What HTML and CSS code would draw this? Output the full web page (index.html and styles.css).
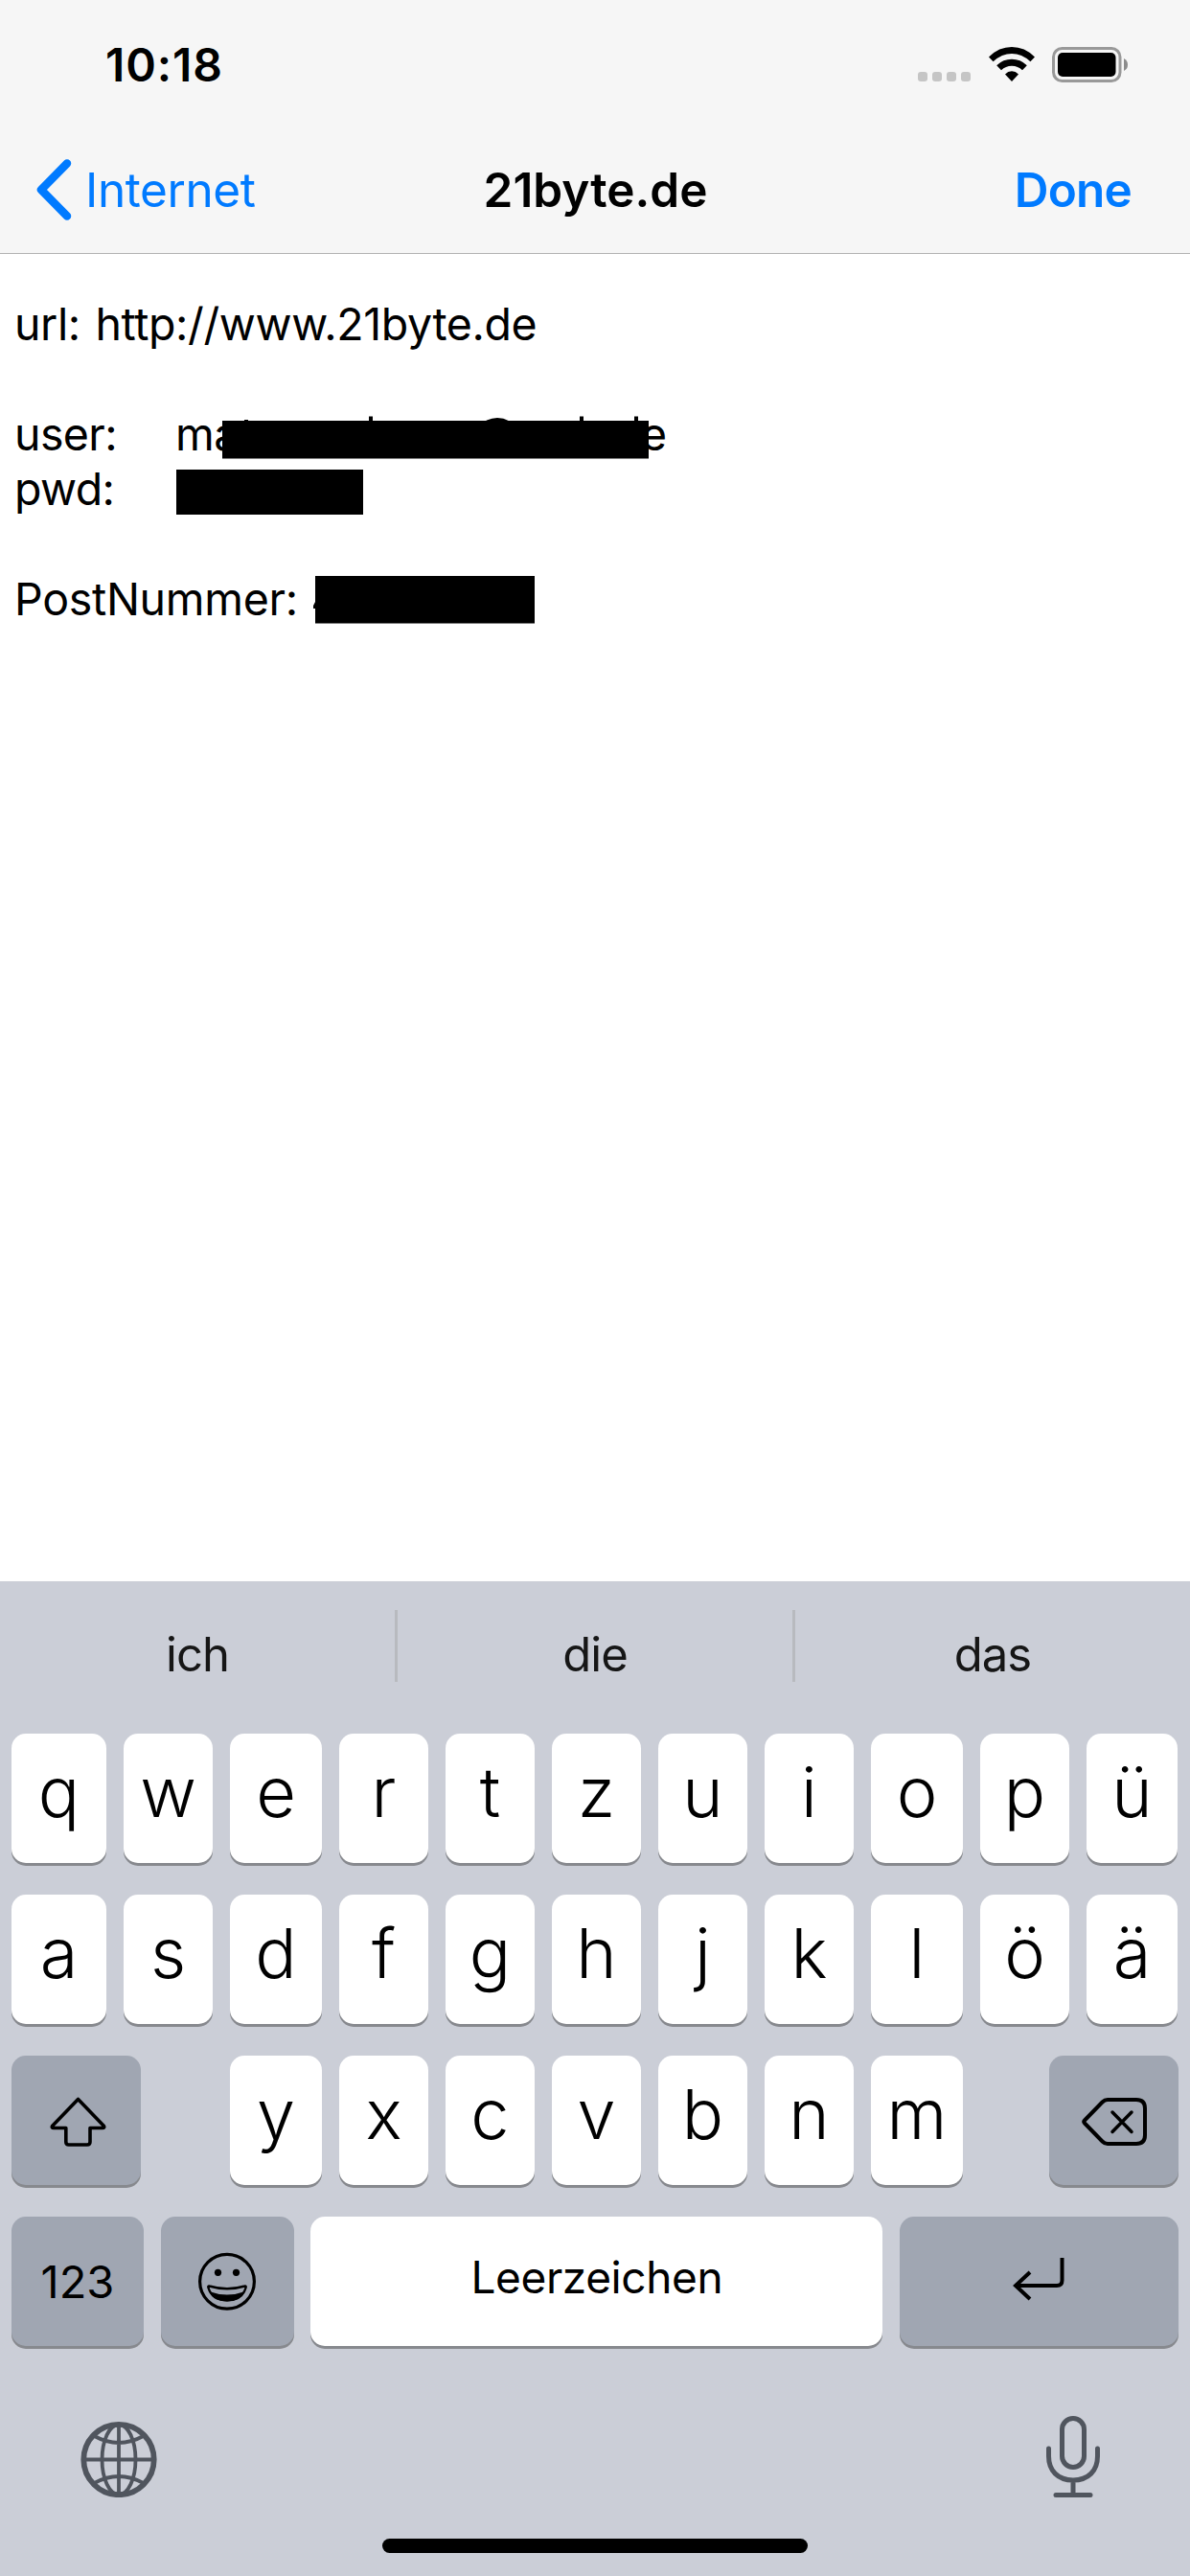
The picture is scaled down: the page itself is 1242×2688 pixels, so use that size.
FILE: index.html
```html
<!DOCTYPE html>
<html lang="de">
<head>
<meta charset="utf-8">
<title>21byte.de</title>
<link rel="stylesheet" href="styles.css">
</head>
<body>
<div class="screen">
  <header class="header">
    <div class="status">
      <span class="time">10:18</span>
      <div class="status-icons">
        <svg class="signal" width="55" height="10" viewBox="0 0 55 10" fill="#c5c5c5"><rect width="10" height="10" rx="3"/><rect x="15" width="10" height="10" rx="3"/><rect x="30" width="10" height="10" rx="3"/><rect x="45" width="10" height="10" rx="3"/></svg>
        <svg class="wifi" width="48" height="36" viewBox="0 0 48 36"><path d="M0 10.4Q10.500 0 24 0T48 10.400L43.400 15.200Q34.500 7 24 7T4.600 15.200ZM8.200 19.200Q15 12.800 24 12.800T39.800 19.200L35 24.200Q30.500 19.700 24 19.700T13 24.200ZM17 28.400Q20 25.300 24 25.300T31 28.400L24 36Z"/></svg>
        <svg class="battery" width="80" height="37" viewBox="0 0 80 37"><rect x="1.500" y="1.500" width="69.500" height="34" rx="9" fill="none" stroke="#999" stroke-width="3"/><rect x="6" y="6" width="60.500" height="25" rx="5"/><path d="M75 12Q79 14 79 18.500T75 25Z" fill="#8c8c8c"/></svg>
      </div>
    </div>
    <nav class="nav">
      <a class="back"><svg width="37" height="64" viewBox="0 0 37 64" fill="none" stroke="#007aff" stroke-width="8.500" stroke-linecap="round" stroke-linejoin="round"><path d="M32 4.500L5 32L32 59.500"/></svg><span class="back-label">Internet</span></a>
      <h1 class="title">21byte.de</h1>
      <a class="done">Done</a>
    </nav>
  </header>

  <main class="note">
    <p class="line"><span class="url">url: http://www.21byte.de</span></p>
    <p class="line"></p>
    <p class="line"><span class="label">user:</span><span class="user">ma</span><span class="user-end">e</span>
      <svg class="user-bar" width="445" height="46" viewBox="0 0 445 46"><path d="M0 6H445V45.500H0ZM23 5h4v2h-4ZM153 1.500h4v6h-4ZM373 1.500h4v6h-4ZM430 1.500h4v6h-4Z"/><path d="M275 8Q287 1.500 299 8" fill="none" stroke="#000" stroke-width="3.500"/></svg></p>
    <p class="line"><span class="label">pwd:</span><i class="pwd-bar"></i></p>
    <p class="line"></p>
    <p class="line"><span class="post">PostNummer:</span><svg class="post-bar" width="231" height="50" viewBox="0 0 231 50"><path d="M2 0H231V49.500H2V34H0V31L2 27Z"/></svg></p>
  </main>

  <section class="keyboard">
    <div class="suggestions"><span>ich</span><i></i><span>die</span><i></i><span>das</span></div>
    <div class="keys">
      <div class="row letters"><b>q</b><b>w</b><b>e</b><b>r</b><b>t</b><b>z</b><b>u</b><b>i</b><b>o</b><b>p</b><b>ü</b></div>
      <div class="row letters"><b>a</b><b>s</b><b>d</b><b>f</b><b>g</b><b>h</b><b>j</b><b>k</b><b>l</b><b>ö</b><b>ä</b></div>
      <div class="row third">
        <b class="dark"><svg width="135" height="135" viewBox="0 0 135 135" fill="none" stroke="#000" stroke-width="3.600" stroke-linejoin="round"><path d="M69.500 45.500L42.500 73.500Q41.500 75.500 44 75.500H56.800V90Q56.800 93 59.800 93H79Q82 93 82 90V75.500H95Q97.500 75.500 96.500 73.500Z"/></svg></b>
        <b class="y">y</b><b>x</b><b>c</b><b>v</b><b>b</b><b>n</b><b>m</b>
        <b class="dark delete"><svg width="135" height="135" viewBox="0 0 135 135" fill="none" stroke="#000" stroke-width="4" stroke-linecap="round" stroke-linejoin="round"><path d="M37 67.500L55.500 48.500Q58 46 61 46H91Q100 46 100 55V83Q100 92 91 92H61Q58 92 55.500 89.500L37 70.500Q35.500 69 37 67.500Z"/><path stroke-width="3.500" d="M66 59L86 79.500M86 59L66 79.500"/></svg></b>
      </div>
      <div class="row fourth">
        <b class="dark num">123</b>
        <b class="dark"><svg width="139" height="135" viewBox="0 0 139 135" fill="none" stroke="#000" stroke-width="3.200"><circle cx="69" cy="67.800" r="28.400"/><g fill="#000" stroke="none"><circle cx="59.500" cy="58.300" r="3.600"/><circle cx="78.500" cy="58.300" r="3.600"/><path d="M50 78Q69 85 88 78Q83 88.500 69 88.500T50 78Z"/></g><path stroke-width="2.400" stroke-linejoin="round" d="M50.500 72.500Q69 78 87.500 72.500Q89 72 88.600 74C86 83 79 87.300 69 87.300S52 83 49.400 74Q49 72 50.500 72.500Z"/></svg></b>
        <b class="space">Leerzeichen</b>
        <b class="dark"><svg width="291" height="135" viewBox="0 0 291 135" fill="none" stroke="#000" stroke-width="4"><path d="M169.500 43V66.500Q169.500 72 164 72H121M136 58L121 72L136 86"/></svg></b>
      </div>
    </div>
    <div class="bottom">
      <svg width="80" height="86" viewBox="0 0 80 86" fill="none" stroke="#50555e" stroke-width="3.800"><circle cx="40" cy="46.500" r="36.700" stroke-width="5.800"/><ellipse cx="40" cy="46.500" rx="17.500" ry="36.500"/><path d="M40 10V83M3 46.500H77M14.500 22Q40 36 65.500 22M14.500 71Q40 57 65.500 71"/></svg>
      <svg width="56" height="86" viewBox="0 0 56 86" fill="none" stroke="#50555e" stroke-width="5" stroke-linecap="round"><rect x="16.500" y="3.500" width="23" height="51" rx="11.500"/><path d="M2.500 35V43C2.500 58 12 68 28 68S53.500 58 53.500 43V35M28 68V83M10 83.500H46"/></svg>
    </div>
    <div class="home"></div>
  </section>
</div>
</body>
</html>
```
FILE: styles.css
```css
* { box-sizing: border-box; }
body { margin: 0; background: #fff; color: #000; font-family: Inter, "Liberation Sans", sans-serif; }
svg { display: block; flex: none; }
.screen { width: 1242px; height: 2688px; display: flex; flex-direction: column; overflow: hidden; }

.header { height: 265px; flex: none; background: #f6f6f6; border-bottom: 1px solid #b2b2b2; }
.status { height: 136px; display: flex; justify-content: space-between; padding: 0 64px 0 110px; }
.time { font-size: 48px; font-weight: 600; line-height: 136px; letter-spacing: 0.9px; white-space: nowrap; }
.status-icons { display: flex; align-items: flex-start; padding-top: 49px; }
.signal { margin-top: 26px; }
.wifi { margin-left: 18.500px; }
.battery { margin-left: 18.500px; }
.nav { height: 124px; display: grid; grid-template-columns: 1fr auto 1fr; align-items: center; padding: 0 61px 0 38px; line-height: 60px; font-size: 49.500px; }
.back { display: flex; align-items: center; gap: 14px; color: #007aff; letter-spacing: -0.4px; }
.title { margin: 0 -12px 0 12px; font-size: 49.500px; font-weight: 600; }
.done { justify-self: end; color: #007aff; font-weight: 600; letter-spacing: -0.8px; }

.note { height: 1385px; flex: none; padding: 45px 15px 0; font-size: 46.500px; letter-spacing: -0.6px; }
.line { position: relative; margin: 0; height: 57.330px; line-height: 57.330px; display: flex; white-space: nowrap; }
.url { letter-spacing: -0.4px; word-spacing: 3px; }
.label { width: 168px; }
.user { width: 486px; }
.user-bar { position: absolute; left: 216.500px; top: 8.200px; }
.pwd-bar { width: 195px; height: 47.500px; margin-top: 8px; margin-left: 1px; background: #000; }
.post { width: 312px; letter-spacing: -0.3px; }
.post-bar { margin-top: 4px; }

.keyboard { height: 1038px; flex: none; background: #cbced7; display: flex; flex-direction: column; }
.suggestions { height: 159px; display: flex; align-items: flex-start; padding-top: 30px; font-size: 49px; color: #161616; letter-spacing: -1px; }
.suggestions span { flex: 1; text-align: center; line-height: 94px; }
.suggestions i { width: 3px; height: 75px; background: #b8babf; }
.keys { display: grid; gap: 33px; padding: 0 12px; }
.row { display: grid; height: 135px; column-gap: 18px; }
.row b { display: flex; align-items: center; justify-content: center; height: 135px; padding-bottom: 15px; border-radius: 15px; background: #fff; box-shadow: 0 3px 0 #87898e; font-size: 72px; font-weight: 340; }
.letters { grid-template-columns: 99px 93px 96px 93px 93px 93px 93px 93px 96px 93px 95px; }
.third { grid-template-columns: 210px 96px 93px 93px 93px 93px 93px 96px 207px; }
.row .dark { padding: 0; background: #a0a6b2; }
.third .dark { width: 135px; }
.third .delete { justify-self: end; }
.fourth { grid-template-columns: 138px 139px 597px 291px; column-gap: 0; justify-content: space-between; }
.row .num { font-size: 47px; font-weight: 400; }
.row .space { font-size: 46px; font-weight: 400; padding-bottom: 10px; letter-spacing: -0.4px; }
.bottom { height: 86px; margin-top: 72px; display: flex; justify-content: space-between; padding: 0 94px 0 83.500px; }
.home { width: 444px; height: 15px; margin: 43px auto 0; border-radius: 8px; background: #000; }
```
